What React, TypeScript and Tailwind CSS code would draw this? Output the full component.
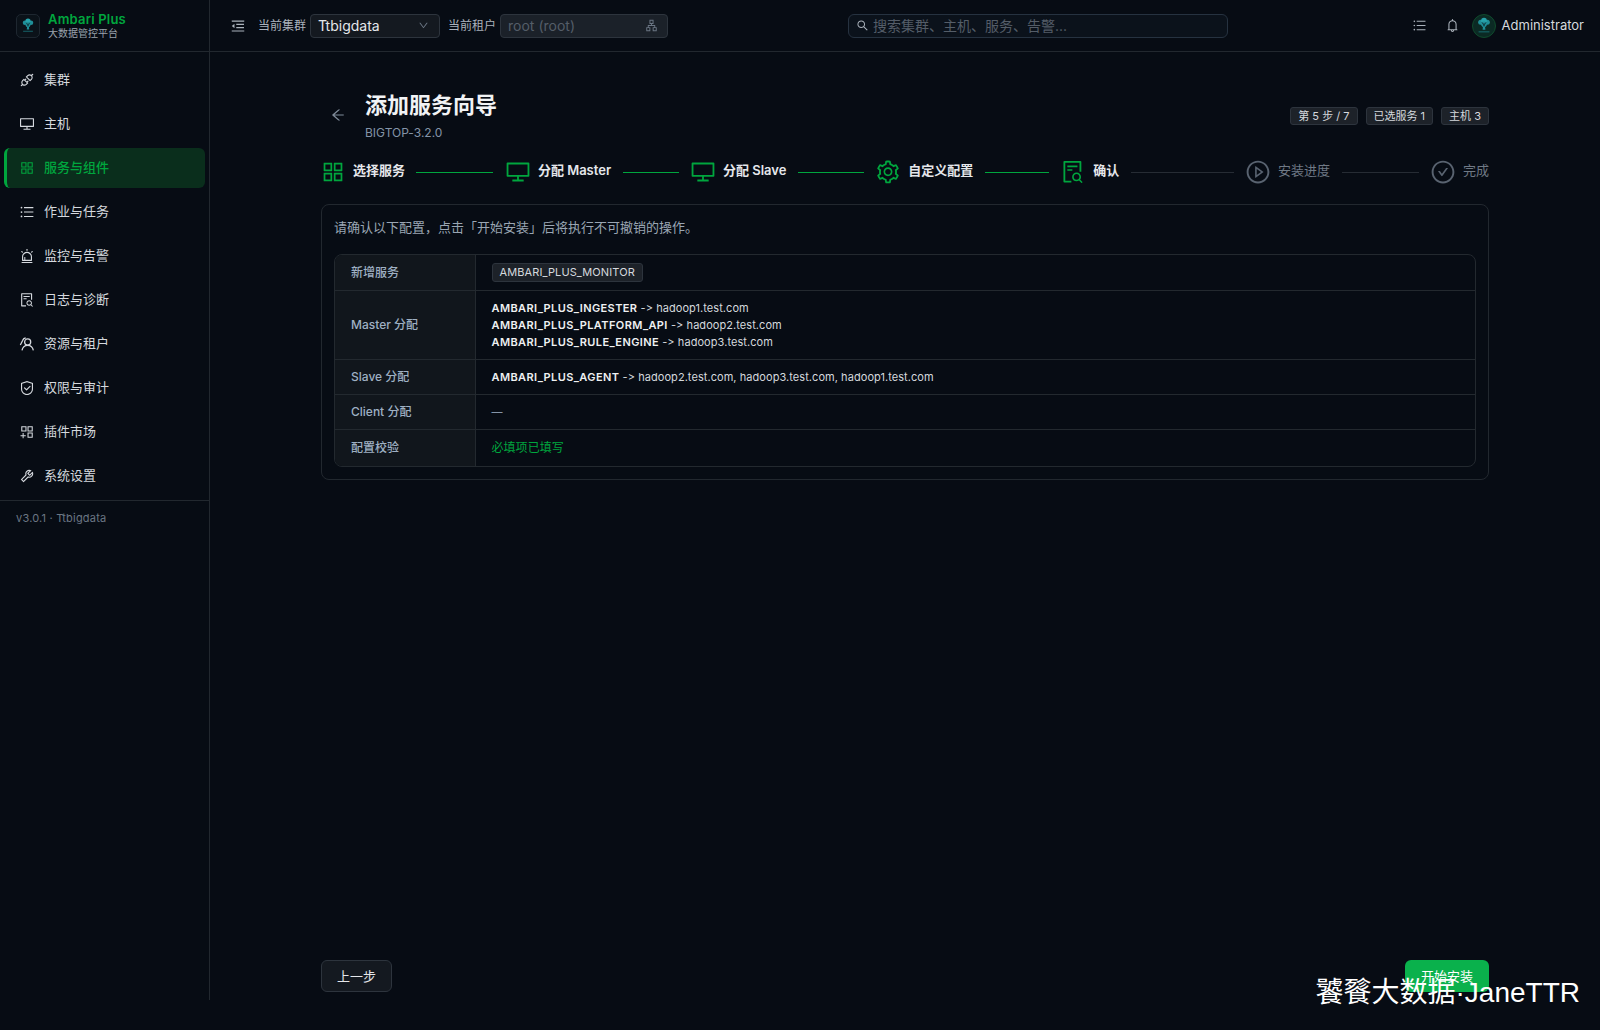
import React from 'react';
import {
  AiOutlineAlert,
  AiOutlineApartment,
  AiOutlineApi,
  AiOutlineAppstore,
  AiOutlineAppstoreAdd,
  AiOutlineArrowLeft,
  AiOutlineBell,
  AiOutlineCheckCircle,
  AiOutlineDesktop,
  AiOutlineDown,
  AiOutlineFileSearch,
  AiOutlineMenuFold,
  AiOutlinePlayCircle,
  AiOutlineSafety,
  AiOutlineSearch,
  AiOutlineSetting,
  AiOutlineTool,
  AiOutlineUnorderedList,
} from 'react-icons/ai';

type IconLike = React.FC<{ className?: string }>;

const TenantIcon: IconLike = ({ className }) => (
  <svg viewBox="0 0 24 24" width="1em" height="1em" fill="none" stroke="currentColor" strokeWidth="1.9" className={className}>
    <circle cx="13" cy="9" r="4.6" />
    <path d="M4.5 21.5c.8-4.6 4-7.6 8.5-7.6s7.7 3 8.5 7.6" />
    <path d="M10 3c-2.6 0-3.8 1.4-4.4 3.4L2 13.5" />
  </svg>
);

const navItems: { label: string; icon: IconLike; active?: boolean }[] = [
  { label: '集群', icon: AiOutlineApi },
  { label: '主机', icon: AiOutlineDesktop },
  { label: '服务与组件', icon: AiOutlineAppstore, active: true },
  { label: '作业与任务', icon: AiOutlineUnorderedList },
  { label: '监控与告警', icon: AiOutlineAlert },
  { label: '日志与诊断', icon: AiOutlineFileSearch },
  { label: '资源与租户', icon: TenantIcon },
  { label: '权限与审计', icon: AiOutlineSafety },
  { label: '插件市场', icon: AiOutlineAppstoreAdd },
  { label: '系统设置', icon: AiOutlineTool },
];

const steps: { label: string; icon: IconLike; done: boolean; line?: string }[] = [
  { label: '选择服务', icon: AiOutlineAppstore, done: true, line: 'w-[77px] bg-[#00a63e]' },
  { label: '分配 Master', icon: AiOutlineDesktop, done: true, line: 'w-[56px] bg-[#00a63e]' },
  { label: '分配 Slave', icon: AiOutlineDesktop, done: true, line: 'w-[66px] bg-[#00a63e]' },
  { label: '自定义配置', icon: AiOutlineSetting, done: true, line: 'w-[64px] bg-[#00a63e]' },
  { label: '确认', icon: AiOutlineFileSearch, done: true, line: 'w-[103px] bg-[#262c34]' },
  { label: '安装进度', icon: AiOutlinePlayCircle, done: false, line: 'w-[77px] bg-[#262c34]' },
  { label: '完成', icon: AiOutlineCheckCircle, done: false },
];

const TreeLogo: React.FC<{ className?: string }> = ({ className }) => (
  <svg viewBox="0 0 24 24" className={className} fill="none">
    <circle cx="8" cy="7.5" r="3" fill="#1f8f98" />
    <circle cx="16" cy="7.5" r="3" fill="#1f8f98" />
    <circle cx="12" cy="5.5" r="3.5" fill="#27a3ab" />
    <circle cx="12" cy="10" r="3.4" fill="#1f8f98" />
    <path d="M12 8.5v6M9.5 7.5 12 11.5l2.5-4" stroke="#0b2b30" strokeWidth="0.9" />
    <path d="M10.8 12.5h2.4l.5 4h-3.4z" fill="#1f8f98" />
    <path d="M5.5 19h13" stroke="#16666c" strokeWidth="1.3" />
  </svg>
);

const Badge: React.FC<{ children: React.ReactNode }> = ({ children }) => (
  <span className="flex h-[18px] items-center rounded-[3px] border border-[#2d343d] bg-[#1d2229] px-[7px] text-[11px] text-[#d5d9de]">
    {children}
  </span>
);

const Row: React.FC<{ label: string; height: string; last?: boolean; children: React.ReactNode }> = ({
  label,
  height,
  last,
  children,
}) => (
  <div className={`flex ${height} ${last ? '' : 'border-b border-[#23292f]'}`}>
    <div className="flex w-[141px] shrink-0 items-center border-r border-[#23292f] bg-[#11161c] pl-4 text-xs font-medium text-[#9fb0c3]">
      {label}
    </div>
    <div className="flex flex-1 flex-col justify-center pl-[15.5px] text-[11px] tracking-[0.06px] text-[#d5d9de]">
      {children}
    </div>
  </div>
);

const Assign: React.FC<{ name: string; to: string }> = ({ name, to }) => (
  <div className="leading-[17px]">
    <span className="font-semibold tracking-[0.4px] text-[#eef0f2]">{name}</span> -&gt; {to}
  </div>
);

export default function App() {
  return (
    <div className="relative h-[1030px] w-full overflow-hidden bg-[#070c14] font-['Inter','Noto_Sans_CJK_SC',sans-serif] text-[#e5e7eb] [font-variant-ligatures:none]">
      <div className="flex h-[1000px]">
        {/* Sidebar */}
        <aside className="flex w-[210px] shrink-0 flex-col border-r border-[#22282f]">
          <div className="flex h-[52px] shrink-0 items-center gap-2 border-b border-[#22282f] pl-4">
            <div className="flex h-6 w-6 items-center justify-center rounded-[5px] border border-[#1e2730] bg-[#0b1219]">
              <TreeLogo className="h-[18px] w-[18px]" />
            </div>
            <div className="flex flex-col">
              <span className="text-[13px] font-semibold leading-[15px] tracking-[0.2px] text-[#00a63e]">Ambari Plus</span>
              <span className="text-[10px] leading-[12px] text-[#9aa3ad]">大数据管控平台</span>
            </div>
          </div>
          <nav className="flex h-[449px] shrink-0 flex-col gap-1 border-b border-[#22282f] pl-1 pr-1 pt-2">
            {navItems.map((item) => {
              const Icon = item.icon;
              return (
                <div
                  key={item.label}
                  className={`flex h-10 items-center gap-[9px] rounded-md pl-[15px] text-[13px] ${
                    item.active
                      ? 'border-l-[3px] border-[#00a63e] bg-[#0a2e1c] !pl-[12px] font-medium text-[#00a63e]'
                      : 'text-[#d5d9de]'
                  }`}
                >
                  <Icon className="text-[16px]" />
                  <span>{item.label}</span>
                </div>
              );
            })}
          </nav>
          <div className="pl-4 pt-[9px] text-[11px] tracking-[0.2px] text-[#6b7684]">v3.0.1 · Ttbigdata</div>
        </aside>

        <div className="flex min-w-0 flex-1 flex-col">
          {/* Top bar */}
          <header className="flex h-[52px] shrink-0 items-center border-b border-[#22282f] pl-5 pr-4">
            <AiOutlineMenuFold className="text-[16px] text-[#aab2bb]" />
            <span className="ml-3 text-xs text-[#aab2bb]">当前集群</span>
            <div className="ml-1 flex h-6 w-[130px] items-center justify-between rounded border border-[#2d343d] bg-[#141920] px-[7px] text-sm text-[#e5e7eb]">
              Ttbigdata
              <AiOutlineDown className="mr-[3px] text-[11px] text-[#6b7684]" />
            </div>
            <span className="ml-2 text-xs text-[#aab2bb]">当前租户</span>
            <div className="ml-1 flex h-6 w-[168px] items-center justify-between rounded border border-[#2d343d] bg-[#1b2129] px-[7px] text-sm text-[#545d68]">
              root (root)
              <AiOutlineApartment className="mr-[2px] text-[13px] text-[#6b7684]" />
            </div>
            <div className="ml-[180px] flex h-6 w-[380px] items-center gap-1 rounded-md border border-[#263240] bg-[#0b121b] px-[7px] text-sm text-[#545d68]">
              <AiOutlineSearch className="text-[13px] text-[#aab2bb]" />
              搜索集群、主机、服务、告警...
            </div>
            <AiOutlineUnorderedList className="ml-auto text-[15px] text-[#aab2bb]" />
            <AiOutlineBell className="ml-[18px] text-[15px] text-[#aab2bb]" />
            <div className="ml-3 flex h-6 w-6 items-center justify-center rounded-full border border-[#0f4a2c] bg-[#0b2a24]">
              <TreeLogo className="h-5 w-5" />
            </div>
            <span className="ml-[6px] mt-px text-[13px] text-[#d5d9de]">Administrator</span>
          </header>

          {/* Wizard */}
          <main className="flex flex-1 flex-col px-[111px] pb-2">
            <div className="mt-[37px] flex h-[54px] items-start">
              <AiOutlineArrowLeft className="ml-[9px] mt-[18px] text-[16px] text-[#7f8b99]" />
              <div className="ml-[19px] pt-px">
                <h1 className="text-[22px] font-semibold leading-[30px] text-[#f1f3f5]">添加服务向导</h1>
                <div className="mt-[5px] text-xs leading-4 text-[#8494a7]">BIGTOP-3.2.0</div>
              </div>
              <div className="ml-auto mt-[18px] flex gap-2">
                <Badge>第 5 步 / 7</Badge>
                <Badge>已选服务 1</Badge>
                <Badge>主机 3</Badge>
              </div>
            </div>

            <div className="-ml-px mt-[17px] flex h-6 items-center justify-between">
              {steps.map((step) => {
                const Icon = step.icon;
                return (
                  <React.Fragment key={step.label}>
                    <div className="flex items-center gap-[7px]">
                      <Icon className={`text-[26px] ${step.done ? 'text-[#00a63e]' : 'text-[#596370]'}`} />
                      <span
                        className={`mb-[3px] text-[13px] ${
                          step.done ? 'font-semibold text-[#e5e7eb]' : 'text-[#6f7985]'
                        }`}
                      >
                        {step.label}
                      </span>
                    </div>
                    {step.line && <div className={`mt-px h-px ${step.line}`} />}
                  </React.Fragment>
                );
              })}
            </div>

            <section className="mt-[20px] h-[276px] rounded-lg border border-[#22282f] p-3">
              <p className="h-[37px] text-[13px] leading-5 text-[#9aa6b3]">
                请确认以下配置，点击「开始安装」后将执行不可撤销的操作。
              </p>
              <div className="overflow-hidden rounded-lg border border-[#23292f]">
                <Row label="新增服务" height="h-[36px]">
                  <span className="w-fit rounded-[3px] border border-[#2d343d] bg-[#1d2229] px-[7px] py-px text-[11px] leading-[15px] tracking-[0.1px] text-[#d5d9de]">
                    AMBARI_PLUS_MONITOR
                  </span>
                </Row>
                <Row label="Master 分配" height="h-[69px]">
                  <Assign name="AMBARI_PLUS_INGESTER" to="hadoop1.test.com" />
                  <Assign name="AMBARI_PLUS_PLATFORM_API" to="hadoop2.test.com" />
                  <Assign name="AMBARI_PLUS_RULE_ENGINE" to="hadoop3.test.com" />
                </Row>
                <Row label="Slave 分配" height="h-[35px]">
                  <Assign name="AMBARI_PLUS_AGENT" to="hadoop2.test.com, hadoop3.test.com, hadoop1.test.com" />
                </Row>
                <Row label="Client 分配" height="h-[35px]">
                  <span className="text-[#8494a7]">—</span>
                </Row>
                <Row label="配置校验" height="h-[36px]" last>
                  <span className="text-xs text-[#00a63e]">必填项已填写</span>
                </Row>
              </div>
            </section>

            <div className="mt-auto flex items-center justify-between">
              <button className="h-8 w-[71px] rounded-md border border-[#2d343d] bg-[#141920] pt-px text-[13px] text-[#e5e7eb]">
                上一步
              </button>
              <button className="h-8 w-[84px] rounded-md bg-[#0ab14c] pt-px text-[13px] text-white">开始安装</button>
            </div>
          </main>
        </div>
      </div>

      {/* Watermark */}
      <div className="absolute bottom-[21px] right-5 font-['Liberation_Sans','Noto_Sans_CJK_SC',sans-serif] text-[28px] leading-8 text-white">
        饕餮大数据·JaneTTR
      </div>
    </div>
  );
}
